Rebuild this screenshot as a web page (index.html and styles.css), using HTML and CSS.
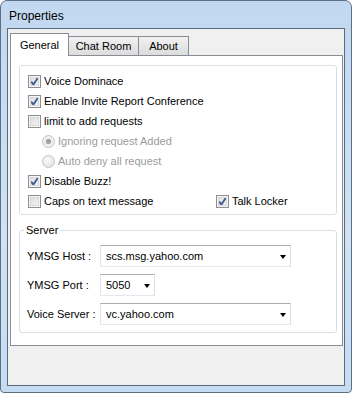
FILE: index.html
```html
<!DOCTYPE html>
<html lang="en">
<head>
    <meta charset="UTF-8">
    <meta name="viewport" content="width=device-width, initial-scale=1.0">
    <title>Properties</title>
    <link rel="stylesheet" href="styles.css">
</head>
<body>
    <div class="window">
        <div class="titlebar">Properties</div>
        <div class="client">
            <div class="tabs">
                <span class="tab tab-general active">General</span>
                <span class="tab tab-chat">Chat Room</span>
                <span class="tab tab-about">About</span>
            </div>
            <div class="panel">
                <div class="group options">
                    <label class="row">
                        <span class="box checked"></span> Voice Dominace
                    </label>
                    <label class="row">
                        <span class="box checked"></span> Enable Invite Report Conference
                    </label>
                    <label class="row">
                        <span class="box"></span> limit to add requests
                    </label>
                    <label class="row sub disabled">
                        <span class="radio selected"></span> Ignoring request Added
                    </label>
                    <label class="row sub disabled">
                        <span class="radio"></span> Auto deny all request
                    </label>
                    <label class="row">
                        <span class="box checked"></span> Disable Buzz!
                    </label>
                    <div class="row split">
                        <label class="row">
                            <span class="box"></span> Caps on text message
                        </label>
                        <label class="row">
                            <span class="box checked"></span> Talk Locker
                        </label>
                    </div>
                </div>

                <fieldset class="group server">
                    <legend>Server</legend>
                    <div class="field">
                        <span class="field-label">YMSG Host :</span>
                        <div class="combo wide"><span>scs.msg.yahoo.com</span><i class="arrow"></i></div>
                    </div>
                    <div class="field">
                        <span class="field-label">YMSG Port :</span>
                        <div class="combo narrow"><span>5050</span><i class="arrow"></i></div>
                    </div>
                    <div class="field">
                        <span class="field-label">Voice Server :</span>
                        <div class="combo wide"><span>vc.yahoo.com</span><i class="arrow"></i></div>
                    </div>
                </fieldset>
            </div>
        </div>
    </div>
</body>
</html>
```

FILE: styles.css
```css
* {
    margin: 0;
    padding: 0;
    box-sizing: border-box;
}
body {
    font-family: 'Liberation Sans', Arial, sans-serif;
    font-size: 11px;
    color: #000;
    background-color: #ffffff;
}
.window {
    width: 352px;
    height: 393px;
    display: flex;
    flex-direction: column;
    padding: 0 6px 6px 6px;
    border: 1px solid #5f6f82;
    border-radius: 7px 7px 4px 4px;
    background: linear-gradient(180deg, #c1d8f0 0%, #cfe2f6 60%, #c6dcf3 100%);
}
.titlebar {
    height: 27px;
    padding: 8px 0 0 2px;
    font-size: 12px;
    line-height: 14px;
    color: #000;
}
.client {
    flex: 1;
    border: 1px solid #5b6b7d;
    background-color: #f0f0f0;
    padding: 4px 1px 0 2px;
}

/* tabs */
.tabs {
    display: flex;
    align-items: flex-end;
    height: 22px;
}
.tab {
    height: 19px;
    display: flex;
    align-items: center;
    justify-content: center;
    border: 1px solid #898c95;
    border-bottom: none;
    background: linear-gradient(180deg, #f2f2f2 0%, #e6e6e6 50%, #dcdcdc 100%);
    margin-left: -1px;
}
.tab.active {
    position: relative;
    height: 23px;
    margin-bottom: -1px;
    margin-left: 0;
    background: #ffffff;
    padding-bottom: 1px;
}
.tab-general { width: 59px; }
.tab-chat { width: 71px; }
.tab-about { width: 51px; }

.panel {
    height: 291px;
    background-color: #ffffff;
    border: 1px solid #898c95;
    padding: 9px 0 0 8px;
}

/* group boxes */
.group {
    width: 318px;
    border: 1px solid #d5dfe5;
    border-radius: 3px;
}
.options {
    padding: 5px 8px 3px 8px;
}
.row {
    display: flex;
    align-items: center;
    height: 20px;
    gap: 3px;
}
.row.sub {
    padding-left: 14px;
}
.row.split {
    display: grid;
    grid-template-columns: 188px auto;
    gap: 0;
}
.disabled {
    color: #9b9b9b;
}

.box {
    width: 13px;
    height: 13px;
    flex: none;
    border: 1px solid #8e8f8f;
    background: #f4f4f4;
    box-shadow: inset 0 0 0 1px #f4f4f4, inset 0 0 0 2px #d9d9d9;
    background-image: linear-gradient(135deg, #dcdcdc 0%, #f6f6f6 100%);
}
.box.checked {
    background-repeat: no-repeat;
    background-image: url("data:image/svg+xml,%3Csvg xmlns='http://www.w3.org/2000/svg' width='11' height='11'%3E%3Cpath d='M2.2 5.6 L4.4 8.6 L8.9 1.8' fill='none' stroke='%233f5a94' stroke-width='1.8'/%3E%3C/svg%3E"), linear-gradient(135deg, #dcdcdc 0%, #f6f6f6 100%);
}
.radio {
    width: 13px;
    height: 13px;
    flex: none;
    border-radius: 50%;
    border: 1px solid #c3c3c3;
    background: radial-gradient(circle at 40% 35%, #fbfbfb 0%, #e6e6e6 70%);
}
.radio.selected {
    background: radial-gradient(circle, #9d9d9d 0, #a9a9a9 2.5px, #ececec 3px, #f8f8f8 100%);
}

/* server box */
.server {
    margin-top: 8px;
    padding: 8px 7px 7px 7px;
    min-width: 0;
}
.server legend {
    padding: 0 2px;
    margin-left: -3px;
    line-height: 14px;
}
.field {
    display: flex;
    align-items: center;
    height: 22px;
}
.field + .field {
    margin-top: 7px;
}
.field-label {
    width: 73px;
    flex: none;
}
.combo {
    height: 22px;
    display: flex;
    align-items: center;
    justify-content: space-between;
    padding: 0 4px 0 5px;
    background: #ffffff;
    border: 1px solid;
    border-color: #abadb3 #dbdfe6 #e3e9ef #e2e3ea;
}
.combo.wide { width: 191px; }
.combo.narrow { width: 55px; }
.arrow {
    width: 0;
    height: 0;
    border-left: 3.5px solid transparent;
    border-right: 3.5px solid transparent;
    border-top: 4px solid #000;
    margin-top: 1px;
}
```
